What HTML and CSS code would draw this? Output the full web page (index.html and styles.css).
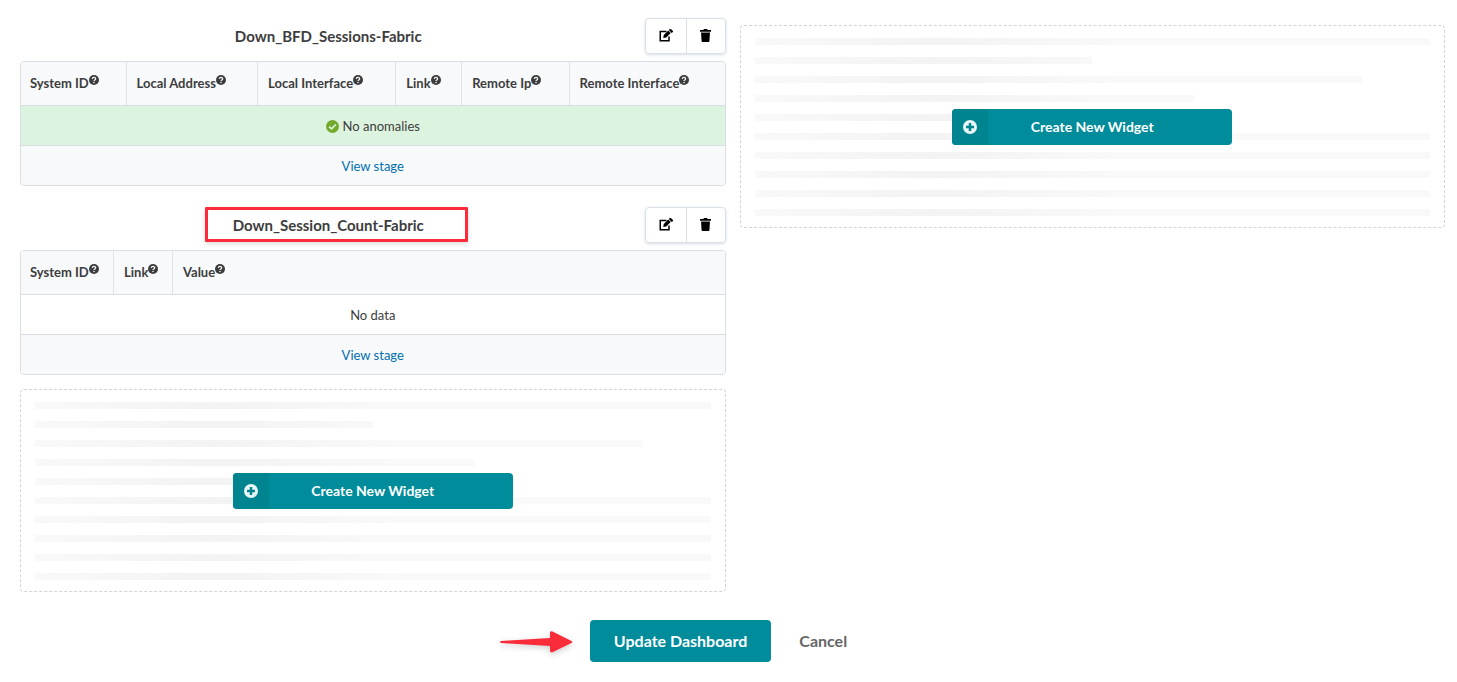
FILE: index.html
```html
<!DOCTYPE html>
<html lang="en">
<head>
    <meta charset="UTF-8">
    <meta name="viewport" content="width=device-width, initial-scale=1.0">
    <title>Edit Dashboard</title>
    <link rel="stylesheet" href="styles.css">
</head>
<body>
    <!-- Shared icons -->
    <svg class="sprite" aria-hidden="true">
        <symbol id="icon-help" viewBox="0 0 18 18">
            <circle cx="9" cy="9" r="9" fill="currentColor"/>
            <path d="M6 7C6.200 3.400 12 3.400 12 6.800C12 9 9 8.700 9 11" fill="none" stroke="#f8f9fb" stroke-width="2.200"/>
            <circle cx="9" cy="13.500" r="1.400" fill="#f8f9fb"/>
        </symbol>
        <symbol id="icon-check" viewBox="0 0 24 24">
            <circle cx="12" cy="12" r="12" fill="currentColor"/>
            <path d="M5.800 12.200l4.300 4.300 8.200-8.200" fill="none" stroke="#dcf3df" stroke-width="3"/>
        </symbol>
        <symbol id="icon-plus" viewBox="0 0 28 28">
            <circle cx="14" cy="14" r="14" fill="currentColor"/>
            <path d="M14 6v16M6 14h16" fill="none" stroke="#008590" stroke-width="5"/>
        </symbol>
        <symbol id="icon-edit" viewBox="0 0 28 26">
            <path d="M15 5H2.500v18.500H20V15" fill="none" stroke="currentColor" stroke-width="3"/>
            <path d="M8.500 18l1-6L18.500 3l5 5-9 9z" fill="currentColor"/>
            <path d="M19.800 1.800L21.500 0h2L28 4v1.800l-2.800 2.200z" fill="currentColor"/>
        </symbol>
        <symbol id="icon-trash" viewBox="0 0 22 26">
            <path d="M0 2h6.500l1.500-2h6l1.500 2H22v3.500H0z" fill="currentColor"/>
            <path d="M2 7h18l-1.200 17.500q-.2 1.500-1.800 1.500H5q-1.600 0-1.800-1.500z" fill="currentColor"/>
        </symbol>
    </svg>

    <main class="dashboard">
        <div class="columns">
            <div class="column">
                <section class="widget">
                    <div class="widget-header">
                        <h2 class="widget-title">Down_BFD_Sessions-Fabric</h2>
                        <div class="button-group">
                            <button type="button" aria-label="Edit"><svg class="icon-edit"><use href="#icon-edit"/></svg></button>
                            <button type="button" aria-label="Delete"><svg class="icon-trash"><use href="#icon-trash"/></svg></button>
                        </div>
                    </div>
                    <table class="stage-table">
                        <thead>
                            <tr>
                                <th>System ID<svg class="help"><use href="#icon-help"/></svg></th>
                                <th>Local Address<svg class="help"><use href="#icon-help"/></svg></th>
                                <th>Local Interface<svg class="help"><use href="#icon-help"/></svg></th>
                                <th>Link<svg class="help"><use href="#icon-help"/></svg></th>
                                <th>Remote Ip<svg class="help"><use href="#icon-help"/></svg></th>
                                <th>Remote Interface<svg class="help"><use href="#icon-help"/></svg></th>
                            </tr>
                        </thead>
                        <tbody>
                            <tr class="positive">
                                <td colspan="6"><svg class="check"><use href="#icon-check"/></svg>No anomalies</td>
                            </tr>
                        </tbody>
                        <tfoot>
                            <tr>
                                <td colspan="6"><a href="#">View stage</a></td>
                            </tr>
                        </tfoot>
                    </table>
                </section>

                <section class="widget">
                    <div class="widget-header">
                        <h2 class="widget-title highlighted">Down_Session_Count-Fabric</h2>
                        <div class="button-group">
                            <button type="button" aria-label="Edit"><svg class="icon-edit"><use href="#icon-edit"/></svg></button>
                            <button type="button" aria-label="Delete"><svg class="icon-trash"><use href="#icon-trash"/></svg></button>
                        </div>
                    </div>
                    <table class="stage-table">
                        <thead>
                            <tr>
                                <th class="col-system">System ID<svg class="help"><use href="#icon-help"/></svg></th>
                                <th class="col-link">Link<svg class="help"><use href="#icon-help"/></svg></th>
                                <th>Value<svg class="help"><use href="#icon-help"/></svg></th>
                            </tr>
                        </thead>
                        <tbody>
                            <tr>
                                <td colspan="3">No data</td>
                            </tr>
                        </tbody>
                        <tfoot>
                            <tr>
                                <td colspan="3"><a href="#">View stage</a></td>
                            </tr>
                        </tfoot>
                    </table>
                </section>

                <div class="new-widget">
                    <div class="line"></div>
                    <div class="line half"></div>
                    <div class="line long"></div>
                    <div class="line medium"></div>
                    <div class="line short"></div>
                    <div class="line"></div>
                    <div class="line"></div>
                    <div class="line"></div>
                    <div class="line"></div>
                    <div class="line"></div>
                    <button type="button" class="create-button">
                        <span class="create-icon"><svg><use href="#icon-plus"/></svg></span>
                        <span class="create-label">Create New Widget</span>
                    </button>
                </div>
            </div>

            <div class="column column-right">
                <div class="new-widget">
                    <div class="line"></div>
                    <div class="line half"></div>
                    <div class="line long"></div>
                    <div class="line medium"></div>
                    <div class="line short"></div>
                    <div class="line"></div>
                    <div class="line"></div>
                    <div class="line"></div>
                    <div class="line"></div>
                    <div class="line"></div>
                    <button type="button" class="create-button">
                        <span class="create-icon"><svg><use href="#icon-plus"/></svg></span>
                        <span class="create-label">Create New Widget</span>
                    </button>
                </div>
            </div>
        </div>

        <div class="actions">
            <div class="update">
                <svg class="arrow" viewBox="0 0 74 24" aria-hidden="true">
                    <path d="M2 11L51 8V2.500Q51.500 .5 53.500 1.500L72.500 11Q74 12 72.500 13L53.500 22.300Q51.500 23 51 21V16L2 13Q0 12 2 11z" fill="#fa2c3a"/>
                </svg>
                <button type="submit" class="update-button">Update Dashboard</button>
            </div>
            <button type="button" class="cancel-button">Cancel</button>
        </div>
    </main>
</body>
</html>
```
FILE: styles.css
```css
*,
*::after {
    box-sizing: border-box;
}

body {
    margin: 0;
    background-color: #fff;
    color: #3d3d3d;
    font-family: Lato, "Open Sans", sans-serif;
    font-size: 13px;
    line-height: 18px;
}

button {
    font-family: inherit;
    cursor: pointer;
}

.sprite {
    display: none;
}

.dashboard {
    padding: 18px 12px 20px 20px;
}

.columns {
    display: grid;
    grid-template-columns: 1fr 1fr;
    gap: 14px;
}

.column-right {
    padding-top: 7px;
}

/* Widgets */
.widget {
    margin-bottom: 21px;
}

.widget + .new-widget {
    margin-top: -7px;
}

.widget-header {
    display: flex;
    align-items: center;
    gap: 8px;
    margin-bottom: 7px;
}

.widget-title {
    position: relative;
    flex: 1;
    margin: 0;
    font-size: 15px;
    line-height: 20px;
    text-align: center;
}

/* Red frame drawn over the title */
.highlighted::after {
    content: '';
    position: absolute;
    top: -8px;
    left: 50%;
    width: 263px;
    height: 35px;
    margin-left: -123px;
    border: 3px solid #fa2c3a;
    border-radius: 1px;
    box-shadow: 0 2px 5px rgba(0, 0, 0, 0.15);
}

.button-group {
    display: flex;
    width: 81px;
    height: 36px;
    border: 1px solid #d9dfe6;
    border-radius: 4px;
    box-shadow: 0 1px 3px rgba(60, 90, 120, 0.2);
}

.button-group button {
    display: flex;
    flex: 1;
    align-items: center;
    justify-content: center;
    padding: 0 0 2px;
    border: none;
    background: none;
    color: #000;
}

.button-group button + button {
    flex: 0 0 39px;
    border-left: 1px solid #d9dfe6;
}

.icon-edit {
    width: 14px;
    height: 13px;
}

.icon-trash {
    width: 11px;
    height: 13px;
}

/* Tables */
.stage-table {
    width: 100%;
    border: 1px solid #d9dde4;
    border-radius: 4px;
    border-spacing: 0;
    overflow: hidden;
}

.stage-table th {
    height: 43px;
    padding: 0 10px 2px;
    border-left: 1px solid #dfe2e7;
    background-color: #f8f9fb;
    text-align: left;
    white-space: nowrap;
}

.stage-table th:first-child {
    border-left: none;
    padding-left: 9px;
}

.stage-table .col-system {
    width: 92px;
}

.stage-table .col-link {
    width: 59px;
}

.stage-table td {
    height: 40px;
    padding: 0 10px;
    border-top: 1px solid #d9dde4;
    text-align: center;
}

.stage-table .positive td {
    background-color: #dcf3df;
}

.stage-table tfoot td {
    background-color: #f8f9fb;
}

.stage-table a {
    color: #0070b0;
    text-decoration: none;
}

.help {
    width: 10px;
    height: 10px;
    vertical-align: 3px;
}

.check {
    width: 13px;
    height: 13px;
    margin-right: 4px;
    vertical-align: -2px;
    color: #73a92c;
}

/* Empty slot with placeholder lines */
.new-widget {
    position: relative;
    display: flex;
    flex-direction: column;
    gap: 12px;
    padding: 12px 14px 11px;
    border: 1px dashed #d4d4d5;
    border-radius: 4px;
}

.line {
    height: 7px;
    background-image: linear-gradient(to right, #f9f9f9 0, #f3f3f3 180px, #f9f9f9 360px);
}

.line.half {
    width: 50%;
}

.line.long {
    width: 90%;
}

.line.medium {
    width: 65%;
}

.line.short {
    width: 35%;
}

.create-button {
    position: absolute;
    top: 50%;
    left: 50%;
    display: flex;
    width: 280px;
    height: 36px;
    margin: -18px 0 0 -140px;
    padding: 0;
    border: none;
    border-radius: 4px;
    background-color: #008c9b;
    color: #fff;
    font-size: 14px;
    font-weight: bold;
    line-height: 36px;
    overflow: hidden;
}

.create-icon {
    display: flex;
    align-items: center;
    justify-content: center;
    width: 36px;
    height: 36px;
    background-color: #008590;
    color: #e8f5f6;
}

.create-icon svg {
    width: 14px;
    height: 14px;
}

.create-label {
    flex: 1;
    padding-right: 36px;
    padding-left: 36px;
    margin-left: -36px;
}

/* Bottom buttons */
.actions {
    display: flex;
    justify-content: center;
    gap: 4px;
    padding-right: 4px;
    margin-top: 28px;
}

.update {
    position: relative;
}

.arrow {
    position: absolute;
    top: 10px;
    right: 100%;
    width: 74px;
    height: 24px;
    margin-right: 17px;
    overflow: visible;
    filter: drop-shadow(0 2px 3px rgba(0, 0, 0, 0.2));
}

.update-button,
.cancel-button {
    height: 42px;
    padding: 0 24px 2px;
    border: none;
    border-radius: 4px;
    background: none;
    color: #666;
    font-size: 16px;
    font-weight: bold;
}

.update-button {
    background-color: #008c9b;
    color: #fff;
}
```
